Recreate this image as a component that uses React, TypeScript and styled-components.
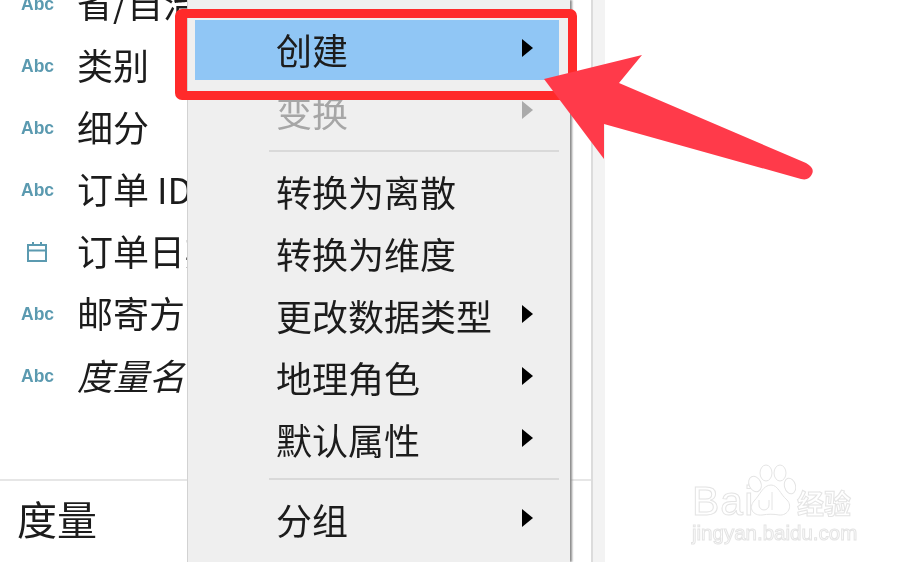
import React from 'react'
import styled, { createGlobalStyle } from 'styled-components'

const CJK = `'Noto Sans CJK SC', 'Noto Sans', sans-serif`

const GlobalStyle = createGlobalStyle`
  html, body {
    margin: 0;
    padding: 0;
    background: #ffffff;
  }
`
const Page = styled.div`
  position: relative;
  width: 904px;
  height: 562px;
  display: flex;
  overflow: hidden;
  background: #ffffff;
  font-family: ${CJK};
  color: #1c1c1c;
`
const Sidebar = styled.div`
  width: 593px;
  height: 100%;
  flex-shrink: 0;
  display: flex;
  flex-direction: column;
  overflow: hidden;
  border-right: 2px solid #dcdcdc;
  box-sizing: border-box;
  filter: blur(0.5px);
`
const Gutter = styled.div`
  width: 12px;
  height: 100%;
  flex-shrink: 0;
  background: #f3f3f3;
`
const FieldList = styled.div`
  margin-top: -29px;
  height: 510px;
  padding-top: 2px;
  flex-shrink: 0;
  display: flex;
  flex-direction: column;
  border-bottom: 2px solid #e6e6e6;
  box-sizing: border-box;
`
const FieldRow = styled.div`
  height: 62px;
  flex-shrink: 0;
  display: flex;
  align-items: center;
  padding-left: 21px;
  white-space: nowrap;
`
const TypeSlot = styled.div`
  width: 56px;
  flex-shrink: 0;
  display: flex;
  align-items: center;
`
const AbcTag = styled.span`
  font-family: 'Liberation Sans', sans-serif;
  font-size: 17.5px;
  font-weight: 700;
  color: #5b9ab0;
`
const FieldName = styled.span<{ $italic?: boolean }>`
  font-size: 36px;
  line-height: 58px;
  height: 62px;
  font-style: ${(p) => (p.$italic ? 'italic' : 'normal')};
`
const SectionTitle = styled.div`
  padding: 11px 0 0 17px;
  font-size: 40px;
  line-height: 52px;
`
const CalendarIcon = styled.svg`
  width: 24px;
  height: 24px;
  margin-left: 4px;
  color: #5b9ab0;
`
const Menu = styled.div`
  position: absolute;
  top: 0;
  bottom: 0;
  left: 187px;
  width: 383px;
  box-sizing: border-box;
  padding: 19px 11px 0 7px;
  display: flex;
  flex-direction: column;
  background: #efefef;
  border-left: 1px solid #d2d2d2;
  box-shadow: 2px 0 2px #8b8b8b;
  filter: blur(0.4px);
`
const MenuItem = styled.div<{ $active?: boolean; $disabled?: boolean }>`
  height: 60px;
  flex-shrink: 0;
  box-sizing: border-box;
  margin: 1px 0;
  padding: 0 26px 2px 81px;
  display: flex;
  align-items: center;
  justify-content: space-between;
  font-size: 36px;
  white-space: nowrap;
  background: ${(p) => (p.$active ? '#90c6f5' : 'transparent')};
  color: ${(p) => (p.$disabled ? '#a6a6a6' : '#1c1c1c')};
`
const Separator = styled.div`
  height: 2px;
  flex-shrink: 0;
  margin: 7px 0 9px 74px;
  background: #d9d9d9;
`
const Caret = styled.span<{ $disabled?: boolean }>`
  width: 0;
  height: 0;
  margin-bottom: 2px;
  border-style: solid;
  border-width: 9.5px 0 9.5px 11px;
  border-color: transparent transparent transparent ${(p) => (p.$disabled ? '#aaaaaa' : '#000000')};
`
const RedFrame = styled.div`
  position: absolute;
  left: 175px;
  top: 9px;
  width: 402px;
  height: 91px;
  box-sizing: border-box;
  border: solid #ff2a2a;
  border-width: 9.5px 9px 9.5px 12px;
  border-radius: 7px;
`
const ArrowMark = styled.svg`
  position: absolute;
  left: 540px;
  top: 50px;
  width: 280px;
  height: 135px;
  overflow: visible;
`
const Watermark = styled.div`
  position: absolute;
  left: 692px;
  top: 464px;
  width: 170px;
  height: 82px;
  color: #ffffff;
  -webkit-text-stroke: 1px #e4e4e4;
  filter: blur(0.3px);
`
const MarkLatin = styled.span`
  position: absolute;
  left: 0;
  top: 19px;
  font-family: 'Liberation Sans', sans-serif;
  font-size: 41px;
  line-height: 37px;
  letter-spacing: 1px;
`
const MarkCjk = styled.span`
  position: absolute;
  left: 105px;
  top: 22px;
  font-size: 27px;
  line-height: 34px;
  font-weight: 700;
`
const MarkUrl = styled.span`
  position: absolute;
  left: 0;
  top: 57px;
  font-family: 'Liberation Sans', sans-serif;
  font-size: 20.5px;
  line-height: 24px;
  white-space: nowrap;
`
const Paw = styled.svg`
  position: absolute;
  left: 54px;
  top: 0;
  width: 50px;
  height: 54px;
`

const fields = [
  { name: '省/自治区' },
  { name: '类别' },
  { name: '细分' },
  { name: '订单 ID' },
  { name: '订单日期', date: true },
  { name: '邮寄方式' },
  { name: '度量名称', italic: true },
]

const topItems = ['转换为离散', '转换为维度']
const subItems = ['更改数据类型', '地理角色', '默认属性']

const App = () => {
  return (
    <Page>
      <GlobalStyle />
      <Sidebar>
        <FieldList>
          {fields.map((f) => (
            <FieldRow key={f.name}>
              <TypeSlot>
                {f.date ? (
                  <CalendarIcon viewBox="0 0 24 24" fill="none" stroke="currentColor" strokeWidth="2">
                    <rect x="3" y="5" width="18" height="16" />
                    <path d="M3 10.5h18M8 2v4M16 2v4" />
                  </CalendarIcon>
                ) : (
                  <AbcTag>Abc</AbcTag>
                )}
              </TypeSlot>
              <FieldName $italic={f.italic}>{f.name}</FieldName>
            </FieldRow>
          ))}
        </FieldList>
        <SectionTitle>度量</SectionTitle>
      </Sidebar>
      <Gutter />

      <Menu>
        <MenuItem $active>
          创建 <Caret />
        </MenuItem>
        <MenuItem $disabled>
          变换 <Caret $disabled />
        </MenuItem>
        <Separator />
        {topItems.map((t) => (
          <MenuItem key={t}>{t}</MenuItem>
        ))}
        {subItems.map((t) => (
          <MenuItem key={t}>
            {t} <Caret />
          </MenuItem>
        ))}
        <Separator />
        <MenuItem>
          分组 <Caret />
        </MenuItem>
      </Menu>

      <RedFrame />
      <ArrowMark viewBox="540 50 280 135">
        <path
          d="M544 79 L642 55 L619 83 L806 163 Q815 168 812 174 Q809 181 801 179 L604 124 L604 159 Z"
          fill="#ff3a4a"
        />
      </ArrowMark>

      <Watermark>
        <MarkLatin>Bai</MarkLatin>
        <Paw viewBox="0 0 50 54" fill="#ffffff" stroke="#e4e4e4" strokeWidth="1">
          <ellipse cx="9" cy="20" rx="6" ry="8" transform="rotate(-25 9 20)" />
          <ellipse cx="20" cy="9" rx="6" ry="8" />
          <ellipse cx="34" cy="9" rx="6" ry="8" />
          <ellipse cx="44" cy="22" rx="5.5" ry="8" transform="rotate(-15 44 22)" />
          <path d="M25 21 C32 21 34 30 41 36 C47 42 42 52 33 51 C28 50 22 50 16 51 C7 52 2 44 8 37 C14 31 17 21 25 21 Z" />
          <path d="M13 36 v5 a3 3 0 0 0 10 0 v-5 M26 28 v18" fill="none" />
        </Paw>
        <MarkCjk>经验</MarkCjk>
        <MarkUrl>jingyan.baidu.com</MarkUrl>
      </Watermark>
    </Page>
  )
}

export default App
